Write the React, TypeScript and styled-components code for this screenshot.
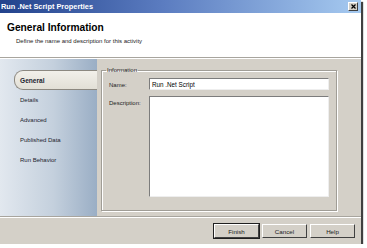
import styled, { createGlobalStyle } from 'styled-components'

const GlobalStyle = createGlobalStyle`
  html, body {
    margin: 0;
    padding: 0;
    background: #ffffff;
  }
  body {
    font-family: 'Liberation Sans', Arial, sans-serif;
    color: #000;
  }
`;

// Dialog frame with its drop shadow
const Window = styled.div`
  width: 361px;
  height: 244px;
  display: flex;
  flex-direction: column;
  background: #d4d0c8;
  box-shadow: 2px 2px 1px rgba(0, 0, 0, 0.75);
  overflow: hidden;
`;

const TitleBar = styled.div`
  height: 13px;
  flex: none;
  display: flex;
  align-items: center;
  justify-content: space-between;
  padding: 0 2px 0 1px;
  background: linear-gradient(to right, #22428c 0%, #5b7cc0 45%, #a6caf0 100%);
`;

const TitleText = styled.span`
  color: #ffffff;
  font-size: 7.4px;
  font-weight: bold;
`;

const CloseButton = styled.div`
  width: 8px;
  height: 7px;
  display: flex;
  align-items: center;
  justify-content: center;
  background: #d4d0c8;
  border-top: 1px solid #ffffff;
  border-left: 1px solid #ffffff;
  border-right: 1px solid #404040;
  border-bottom: 1px solid #404040;
  margin-right: 1px;
`;

const Header = styled.div`
  height: 45px;
  flex: none;
  background: #ffffff;
  padding: 9px 0 0 7px;
  box-sizing: border-box;
  border-bottom: 1px solid #a8a59e;
`;

const HeaderTitle = styled.div`
  font-size: 10.2px;
  font-weight: bold;
  line-height: 12px;
`;

const HeaderSub = styled.div`
  font-size: 6px;
  color: #222;
  margin: 4px 0 0 9px;
`;

const Body = styled.div`
  flex: 1;
  display: flex;
  border-top: 1px solid #ffffff;
  border-bottom: 1px solid #a8a59e;
`;

const Nav = styled.div`
  width: 97px;
  flex: none;
  display: flex;
  flex-direction: column;
  padding-top: 11px;
  box-sizing: border-box;
  background: linear-gradient(to right, #e2e8ef 0%, #c4d0dd 55%, #9aaec5 100%);
`;

const NavItem = styled.div<{ active?: boolean }>`
  height: 20px;
  display: flex;
  align-items: center;
  box-sizing: border-box;
  margin-left: ${(p) => (p.active ? '14px' : '0')};
  padding-left: ${(p) => (p.active ? '5px' : '20px')};
  font-size: ${(p) => (p.active ? '6.6px' : '6px')};
  font-weight: ${(p) => (p.active ? 'bold' : 'normal')};
  color: #1c2430;
  ${(p) =>
    p.active &&
    `
    background: linear-gradient(to bottom, #f2f0ea, #e2dfd6);
    border: 1px solid #8c8880;
    border-right: none;
    border-radius: 9px 0 0 9px;
  `}
`;

const Content = styled.div`
  flex: 1;
  padding: 8px 24px 5px 4px;
  display: flex;
`;

const GroupBox = styled.fieldset`
  flex: 1;
  margin: 0;
  padding: 5px 7px 13px 7px;
  border: 1px solid #a09d96;
  box-shadow: inset 1px 1px 0 #ffffff, 1px 1px 0 #ffffff;
  display: grid;
  grid-template-columns: 40px 1fr;
  grid-template-rows: 12px 1fr;
  row-gap: 6px;
  min-width: 0;
`;

const Legend = styled.legend`
  font-size: 6px;
  padding: 0 1px;
  margin-left: -3px;
  color: #222;
`;

const Label = styled.label`
  font-size: 6px;
  color: #222;
  padding-top: 4px;
`;

const TextInput = styled.div`
  background: #ffffff;
  border-top: 1px solid #7c7c7c;
  border-left: 1px solid #7c7c7c;
  border-right: 1px solid #eeeeee;
  border-bottom: 1px solid #eeeeee;
  font-size: 6.3px;
  padding: 2px 2px 0 2px;
  box-sizing: border-box;
`;

const TextArea = styled(TextInput)`
  padding: 0;
`;

const ButtonBar = styled.div`
  height: 26px;
  flex: none;
  display: flex;
  align-items: center;
  justify-content: flex-end;
  gap: 3px;
  padding-right: 6px;
  border-top: 1px solid #ffffff;
`;

const Button = styled.div<{ primary?: boolean }>`
  width: 45px;
  height: 14px;
  box-sizing: border-box;
  display: flex;
  align-items: center;
  justify-content: center;
  font-size: 6.2px;
  color: #222;
  background: #d4d0c8;
  border-top: 1px solid #ffffff;
  border-left: 1px solid #ffffff;
  border-right: 1px solid #404040;
  border-bottom: 1px solid #404040;
  ${(p) => p.primary && `outline: 1px solid #202020;`}
`;

const navItems = ['General', 'Details', 'Advanced', 'Published Data', 'Run Behavior'];

export default function App() {
  return (
    <>
      <GlobalStyle />
      <Window>
        <TitleBar>
          <TitleText>Run .Net Script Properties</TitleText>
          <CloseButton>
            <svg width="5" height="5" viewBox="0 0 5 5">
              <path d="M0.5 0.5 L4.5 4.5 M4.5 0.5 L0.5 4.5" stroke="#000" strokeWidth="1.2" />
            </svg>
          </CloseButton>
        </TitleBar>
        <Header>
          <HeaderTitle>General Information</HeaderTitle>
          <HeaderSub>Define the name and description for this activity</HeaderSub>
        </Header>
        <Body>
          <Nav>
            {navItems.map((item, i) => (
              <NavItem key={item} active={i === 0}>
                {item}
              </NavItem>
            ))}
          </Nav>
          <Content>
            <GroupBox>
              <Legend>Information</Legend>
              <Label>Name:</Label>
              <TextInput>Run .Net Script</TextInput>
              <Label>Description:</Label>
              <TextArea />
            </GroupBox>
          </Content>
        </Body>
        <ButtonBar>
          <Button primary>Finish</Button>
          <Button>Cancel</Button>
          <Button>Help</Button>
        </ButtonBar>
      </Window>
    </>
  )
}
